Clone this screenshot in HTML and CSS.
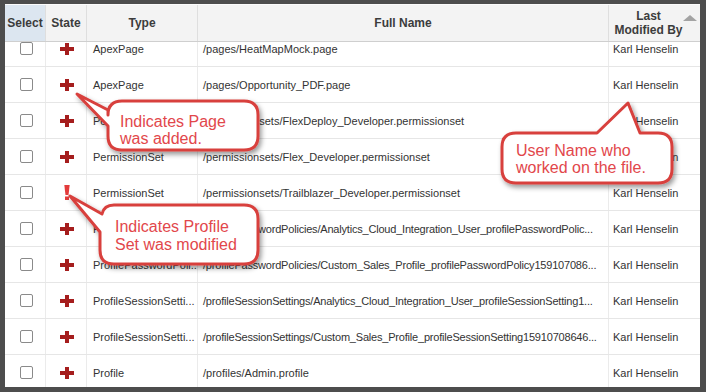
FILE: index.html
```html
<!DOCTYPE html>
<html lang="en">
<head>
    <meta charset="UTF-8">
    <title>Deployment Items</title>
    <link rel="stylesheet" href="styles.css">
</head>
<body>
    <div class="frame">
        <div class="grid">
            <div class="head">
                <div class="th sel">Select</div>
                <div class="th">State</div>
                <div class="th">Type</div>
                <div class="th">Full Name</div>
                <div class="th last">Last<br>Modified By<span class="sort"></span></div>
            </div>
            <div class="body">
                <div class="row first">
                    <div class="cell chk"><span class="box"></span></div>
                    <div class="cell mid"><svg class="plus" width="14" height="12" viewBox="0 0 14 12"><rect x="0" y="4" width="14" height="4"/><rect x="5" y="0" width="4" height="12"/></svg></div>
                    <div class="cell type">ApexPage</div>
                    <div class="cell name">/pages/HeatMapMock.page</div>
                    <div class="cell user">Karl Henselin</div>
                </div>
                <div class="row">
                    <div class="cell chk"><span class="box"></span></div>
                    <div class="cell mid"><svg class="plus" width="14" height="12" viewBox="0 0 14 12"><rect x="0" y="4" width="14" height="4"/><rect x="5" y="0" width="4" height="12"/></svg></div>
                    <div class="cell type">ApexPage</div>
                    <div class="cell name">/pages/Opportunity_PDF.page</div>
                    <div class="cell user">Karl Henselin</div>
                </div>
                <div class="row">
                    <div class="cell chk"><span class="box"></span></div>
                    <div class="cell mid"><svg class="plus" width="14" height="12" viewBox="0 0 14 12"><rect x="0" y="4" width="14" height="4"/><rect x="5" y="0" width="4" height="12"/></svg></div>
                    <div class="cell type">PermissionSet</div>
                    <div class="cell name">/permissionsets/FlexDeploy_Developer.permissionset</div>
                    <div class="cell user">Karl Henselin</div>
                </div>
                <div class="row">
                    <div class="cell chk"><span class="box"></span></div>
                    <div class="cell mid"><svg class="plus" width="14" height="12" viewBox="0 0 14 12"><rect x="0" y="4" width="14" height="4"/><rect x="5" y="0" width="4" height="12"/></svg></div>
                    <div class="cell type">PermissionSet</div>
                    <div class="cell name">/permissionsets/Flex_Developer.permissionset</div>
                    <div class="cell user">Karl Henselin</div>
                </div>
                <div class="row">
                    <div class="cell chk"><span class="box"></span></div>
                    <div class="cell mid"><svg class="bang" width="8" height="15" viewBox="0 0 8 15"><path d="M1.3 0H6.7L5.5 10H2.5Z"/><rect x="2" y="11.5" width="4" height="3.5"/></svg></div>
                    <div class="cell type">PermissionSet</div>
                    <div class="cell name">/permissionsets/Trailblazer_Developer.permissionset</div>
                    <div class="cell user">Karl Henselin</div>
                </div>
                <div class="row">
                    <div class="cell chk"><span class="box"></span></div>
                    <div class="cell mid"><svg class="plus" width="14" height="12" viewBox="0 0 14 12"><rect x="0" y="4" width="14" height="4"/><rect x="5" y="0" width="4" height="12"/></svg></div>
                    <div class="cell type">ProfilePasswordPoli...</div>
                    <div class="cell name long">/profilePasswordPolicies/Analytics_Cloud_Integration_User_profilePasswordPolic...</div>
                    <div class="cell user">Karl Henselin</div>
                </div>
                <div class="row">
                    <div class="cell chk"><span class="box"></span></div>
                    <div class="cell mid"><svg class="plus" width="14" height="12" viewBox="0 0 14 12"><rect x="0" y="4" width="14" height="4"/><rect x="5" y="0" width="4" height="12"/></svg></div>
                    <div class="cell type">ProfilePasswordPoli...</div>
                    <div class="cell name long">/profilePasswordPolicies/Custom_Sales_Profile_profilePasswordPolicy159107086...</div>
                    <div class="cell user">Karl Henselin</div>
                </div>
                <div class="row">
                    <div class="cell chk"><span class="box"></span></div>
                    <div class="cell mid"><svg class="plus" width="14" height="12" viewBox="0 0 14 12"><rect x="0" y="4" width="14" height="4"/><rect x="5" y="0" width="4" height="12"/></svg></div>
                    <div class="cell type">ProfileSessionSetti...</div>
                    <div class="cell name long">/profileSessionSettings/Analytics_Cloud_Integration_User_profileSessionSetting1...</div>
                    <div class="cell user">Karl Henselin</div>
                </div>
                <div class="row">
                    <div class="cell chk"><span class="box"></span></div>
                    <div class="cell mid"><svg class="plus" width="14" height="12" viewBox="0 0 14 12"><rect x="0" y="4" width="14" height="4"/><rect x="5" y="0" width="4" height="12"/></svg></div>
                    <div class="cell type">ProfileSessionSetti...</div>
                    <div class="cell name long">/profileSessionSettings/Custom_Sales_Profile_profileSessionSetting15910708646...</div>
                    <div class="cell user">Karl Henselin</div>
                </div>
                <div class="row">
                    <div class="cell chk"><span class="box"></span></div>
                    <div class="cell mid"><svg class="plus" width="14" height="12" viewBox="0 0 14 12"><rect x="0" y="4" width="14" height="4"/><rect x="5" y="0" width="4" height="12"/></svg></div>
                    <div class="cell type">Profile</div>
                    <div class="cell name">/profiles/Admin.profile</div>
                    <div class="cell user">Karl Henselin</div>
                </div>
            </div>
        </div>

        <!-- callout shapes drawn over the table -->
        <svg class="overlay" width="706" height="392" viewBox="0 0 706 392">
            <defs>
                <filter id="shadow" x="-20%" y="-20%" width="150%" height="150%">
                    <feDropShadow dx="2" dy="3" stdDeviation="2.5" flood-color="#000" flood-opacity="0.4"/>
                </filter>
            </defs>
            <path class="bubble" d="M122 101H244Q258 101 258 115V136Q258 150 244 150H122Q108 150 108 136V126L77 94L108 110V115Q108 101 122 101Z"/>
            <path class="bubble" d="M114 205H244Q258 205 258 219V250Q258 264 244 264H114Q100 264 100 250V232L70 196L102 214Q104 205 114 205Z"/>
            <path class="bubble" d="M516 133H597L628 103L640 133H658Q672 133 672 147V169Q672 183 658 183H516Q502 183 502 169V147Q502 133 516 133Z"/>
        </svg>
        <div class="note note-page">Indicates Page<br>was added.</div>
        <div class="note note-profile">Indicates Profile<br>Set was modified</div>
        <div class="note note-user">User Name who<br>worked on the file.</div>
    </div>
</body>
</html>
```

FILE: styles.css
```css
body {
    margin: 0;
    font-family: "Liberation Sans", Arial, sans-serif;
}
.frame {
    position: relative;
    width: 706px;
    height: 392px;
    box-sizing: border-box;
    padding: 4px 6px 5px 5px;
    background-color: #4d4d4d;
}
.grid {
    height: 100%;
    display: flex;
    flex-direction: column;
    background-color: white;
    overflow: hidden;
}
.head,
.row {
    display: grid;
    grid-template-columns: 41px 41px 111px 411px 1fr;
}
.head {
    flex: none;
    height: 38px;
    box-sizing: border-box;
    background-color: #f3f3f3;
    border-top: 1px solid #fbfbfb;
    border-bottom: 1px solid #cfcfcf;
}
.th {
    display: flex;
    align-items: center;
    justify-content: center;
    text-align: center;
    font-size: 12px;
    line-height: 14px;
    font-weight: bold;
    color: #3c3c3c;
    border-right: 1px solid #dedede;
}
.th.sel {
    background-color: #dce6f0;
}
.th.last {
    position: relative;
    padding-right: 12px;
    border-right: none;
}
.sort {
    position: absolute;
    right: 3px;
    top: 10px;
    border-left: 7px solid transparent;
    border-right: 7px solid transparent;
    border-bottom: 6px solid #a3a3a3;
}
.body {
    flex: 1;
    overflow: hidden;
}
.row {
    height: 36px;
    box-sizing: border-box;
    border-bottom: 1px solid #e6e6e6;
    font-size: 11px;
    color: #333;
}
.row.first {
    margin-top: -11px;
}
.cell {
    display: flex;
    align-items: center;
    min-width: 0;
    overflow: hidden;
    white-space: nowrap;
    border-right: 1px solid #ebebeb;
}
.cell.chk {
    justify-content: center;
    padding-left: 3px;
}
.cell.mid {
    justify-content: center;
    padding-left: 1px;
}
.cell.type {
    padding-left: 6px;
}
.cell.name {
    padding-left: 5px;
}
.cell.long {
    letter-spacing: -0.2px;
}
.cell.user {
    padding-left: 4px;
    border-right: none;
}
.box {
    width: 13px;
    height: 13px;
    box-sizing: border-box;
    border: 1px solid #8a8a8a;
    border-radius: 2px;
    background-color: white;
}
.plus {
    fill: #a51d1d;
}
.bang {
    fill: #e33b3b;
}
.overlay {
    position: absolute;
    left: 0;
    top: 0;
    pointer-events: none;
}
.bubble {
    fill: white;
    stroke: #d8403d;
    stroke-width: 3;
    stroke-linejoin: round;
    filter: url(#shadow);
}
.note {
    position: absolute;
    font-size: 16px;
    line-height: 17px;
    color: #e2474b;
    white-space: nowrap;
}
.note-page {
    left: 120px;
    top: 113px;
}
.note-profile {
    left: 115px;
    top: 218px;
    line-height: 18px;
}
.note-user {
    left: 516px;
    top: 142px;
}
```
